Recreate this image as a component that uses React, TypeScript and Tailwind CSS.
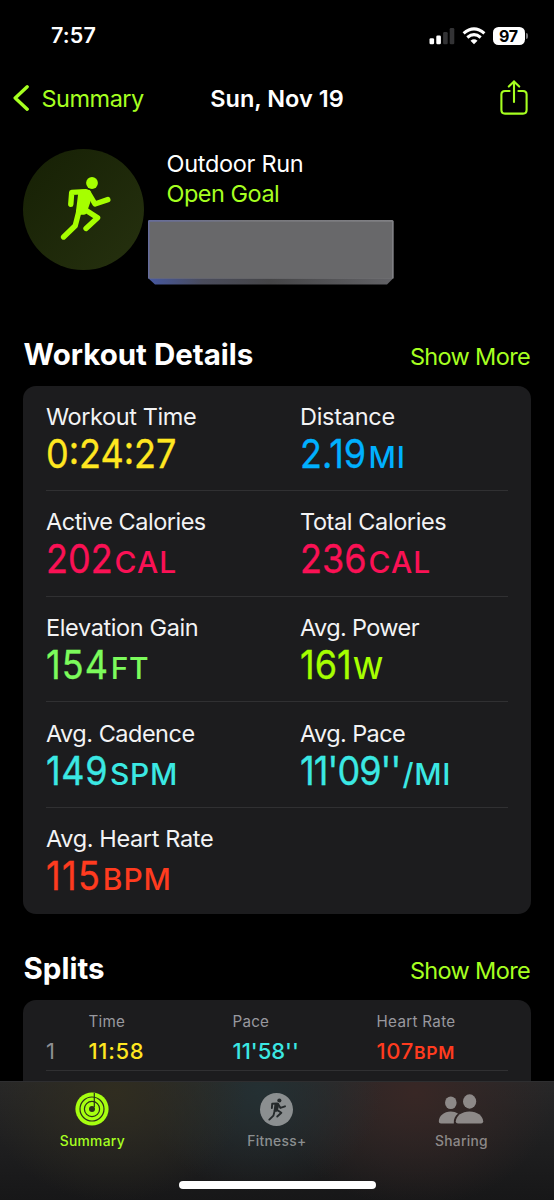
import React from "react";

type Metric = {
  label: string;
  labelClass: string;
  value: string;
  valueClass: string;
  unit: string;
  unitClass: string;
  color: string;
};

const metrics: Metric[] = [
  { label: "Workout Time", labelClass: "tracking-[-0.4px]", value: "0:24:27", valueClass: "", unit: "", unitClass: "", color: "text-[#ffe620]" },
  { label: "Distance", labelClass: "tracking-[-0.28px]", value: "2.19", valueClass: "", unit: "MI", unitClass: "tracking-[0.9px]", color: "text-[#00b0ff]" },
  { label: "Active Calories", labelClass: "tracking-[-0.5px]", value: "202", valueClass: "", unit: "CAL", unitClass: "tracking-[1.2px]", color: "text-[#fa1155]" },
  { label: "Total Calories", labelClass: "tracking-[-0.4px]", value: "236", valueClass: "", unit: "CAL", unitClass: "tracking-[1.2px]", color: "text-[#fa1155]" },
  { label: "Elevation Gain", labelClass: "tracking-[-0.38px]", value: "154", valueClass: "tracking-[1.3px]", unit: "FT", unitClass: "tracking-[0.5px]", color: "text-[#7cfb5c]" },
  { label: "Avg. Power", labelClass: "tracking-[-0.62px]", value: "161", valueClass: "", unit: "W", unitClass: "", color: "text-[#a6ff00]" },
  { label: "Avg. Cadence", labelClass: "tracking-[-0.5px]", value: "149", valueClass: "tracking-[0.7px]", unit: "SPM", unitClass: "tracking-[0.7px]", color: "text-[#3be8e3]" },
  { label: "Avg. Pace", labelClass: "tracking-[-0.6px]", value: "11'09''", valueClass: "tracking-[-1px]", unit: "/MI", unitClass: "tracking-[0.6px]", color: "text-[#3be8e3]" },
  { label: "Avg. Heart Rate", labelClass: "tracking-[-0.36px]", value: "115", valueClass: "tracking-[1.5px]", unit: "BPM", unitClass: "tracking-[1px]", color: "text-[#ff3b1f]" },
];

function Runner({ className }: { className: string }) {
  return (
    <svg viewBox="60 176 52 65" className={className} fill="none" stroke="currentColor" strokeWidth="5.4" strokeLinecap="round" strokeLinejoin="round">
      <circle cx="92" cy="183" r="5.9" fill="currentColor" stroke="none" />
      <path d="M70.8 204.2 71.7 192.4 86 191.6" />
      <path d="M88.5 193 95 204 107.8 199.6" />
      <path d="M84 209 97.6 217.8 86 228.4" />
      <path d="M79 211 75.2 225.8 63.6 237" />
      <path d="M81 192.5H88L87.5 202 84 212H78.6Z" fill="currentColor" />
    </svg>
  );
}

function StatusBar() {
  return (
    <div className="flex h-[71px] shrink-0 items-center justify-between pr-[26px] pl-[51px] text-white">
      <span className="text-[21.5px] leading-none font-semibold tracking-[0.15px]">7:57</span>
      <div className="flex items-center">
        <svg className="mr-[7px] h-[18px] w-[26px]" viewBox="0 0 26 18" fill="#fff">
          <rect x="0.5" y="11.2" width="4.6" height="6" rx="1.3" />
          <rect x="7.3" y="8.5" width="4.6" height="8.7" rx="1.3" />
          <rect x="14.1" y="5" width="4.6" height="12.2" rx="1.3" fill="#333335" />
          <rect x="20.7" y="1" width="4.6" height="16.2" rx="1.3" fill="#333335" />
        </svg>
        <svg className="mr-[7px] h-[18px] w-[24px]" viewBox="0 0 24 18" fill="none" stroke="#fff" strokeWidth="3.1">
          <path d="M1.6 6.4Q12 -2.6 22.4 6.4" />
          <path d="M5.3 10.5Q12 4.9 18.7 10.5" />
          <path d="M12 17.3 8.5 13.7Q12 11 15.5 13.7Z" fill="#fff" stroke="none" />
        </svg>
        <span className="flex h-[18px] w-[32px] items-center justify-center rounded-[5.5px] bg-white text-[16px] leading-none font-bold tracking-[-0.3px] text-black">97</span>
        <span className="ml-[1.5px] h-[6px] w-[2px] rounded-r-full bg-[#77777a]" />
      </div>
    </div>
  );
}

function NavBar() {
  return (
    <div className="flex h-[54px] shrink-0 items-center justify-between pt-px pr-[26px] pl-[13px]">
      <div className="flex w-[198px] items-center text-[#a6ff20]">
        <svg className="mb-px h-[28px] w-[17px]" viewBox="0 0 17 28" fill="none" stroke="currentColor" strokeWidth="3.4" strokeLinecap="round" strokeLinejoin="round">
          <path d="M14.2 2.8 2.2 14 14.2 25.2" />
        </svg>
        <span className="ml-[11.5px] text-[23.5px] leading-[30px] tracking-[-0.5px]">Summary</span>
      </div>
      <span className="text-[23.5px] leading-[30px] font-semibold whitespace-nowrap text-white">Sun, Nov 19</span>
      <div className="flex w-[185px] justify-end text-[#a6ff20]">
        <svg className="mb-[4px] h-[36px] w-[28px]" viewBox="0 0 28 36" fill="none" stroke="currentColor" strokeWidth="2.1" strokeLinecap="round" strokeLinejoin="round">
          <path d="M9.6 12H5Q1.4 12 1.4 15.6V31Q1.4 34.6 5 34.6H23Q26.6 34.6 26.6 31V15.6Q26.6 12 23 12H18.4" />
          <path d="M14 23V2.4M8.8 7.6 14 2.4 19.2 7.6" />
        </svg>
      </div>
    </div>
  );
}

function SectionHead({ title }: { title: string }) {
  return (
    <div className="flex h-[38px] shrink-0 justify-between pr-[24px] pl-[23.5px]">
      <h2 className="text-[29.5px] leading-[35px] font-bold text-white">{title}</h2>
      <span className="mt-[2px] text-[23.5px] leading-[36px] tracking-[-0.65px] text-[#a6ff20]">Show More</span>
    </div>
  );
}

function MetricCell({ m }: { m: Metric }) {
  return (
    <div className="w-[254px] shrink-0 pt-[16.4px] whitespace-nowrap">
      <div className={`text-[23.5px] leading-[30px] text-[#f3f3f4] ${m.labelClass}`}>{m.label}</div>
      <div className={`h-[44px] origin-left scale-x-90 text-[40px] leading-[44px] ${m.color}`}>
        <span className={`[-webkit-text-stroke:0.35px] ${m.valueClass}`}>{m.value}</span>
        {m.unit && <span className={`ml-[2px] inline-block origin-left scale-x-[1.11] text-[30px] leading-none font-medium ${m.unitClass}`}>{m.unit}</span>}
      </div>
    </div>
  );
}

function Tab({ label, className, children }: { label: string; className: string; children: React.ReactNode }) {
  return (
    <div className={`flex w-[184.6px] flex-col items-center ${className}`}>
      <div className="flex h-[34px] items-center">{children}</div>
      <span className="mt-[6px] text-[13.8px] leading-[18px] font-medium tracking-[0.3px]">{label}</span>
    </div>
  );
}

export default function App() {
  const rows: Metric[][] = [];
  for (let i = 0; i < metrics.length; i += 2) rows.push(metrics.slice(i, i + 2));

  return (
    <div className="flex h-[1200px] w-[554px] flex-col overflow-hidden bg-black font-[Inter,sans-serif]">
      <StatusBar />
      <NavBar />

      <main className="flex h-[956px] shrink-0 flex-col overflow-hidden">
        <div className="flex h-[211.5px] shrink-0 pt-[24px] pl-[23px]">
          <div className="flex size-[121px] shrink-0 items-center justify-center rounded-full bg-linear-to-br from-[#162005] to-[#26310f] pb-[2px] pl-[5px] text-[#a6ff00]">
            <Runner className="h-[65px] w-[52px]" />
          </div>
          <div className="ml-[4px]">
            <div className="ml-[18.5px] text-[23.5px] leading-[29.5px]">
              <div className="tracking-[-0.3px] text-white">Outdoor Run</div>
              <div className="tracking-[-0.5px] text-[#a6ff20]">Open Goal</div>
            </div>
            <svg className="mt-[12px] h-[65px] w-[246px]" viewBox="0 0 246 65">
              <defs>
                <linearGradient id="edge" x1="0" x2="1" y1="0" y2="0">
                  <stop offset="0" stopColor="#4658a0" />
                  <stop offset="0.22" stopColor="#4a4c5c" />
                  <stop offset="0.5" stopColor="#454547" />
                  <stop offset="1" stopColor="#626266" />
                </linearGradient>
                <linearGradient id="rim" x1="0" x2="1" y1="0" y2="0">
                  <stop offset="0" stopColor="#666c9c" />
                  <stop offset="0.4" stopColor="#77777c" />
                  <stop offset="1" stopColor="#808084" />
                </linearGradient>
              </defs>
              <path d="M0 1.5Q0 0 1.5 0H244Q245.5 0 245.5 1.5V58L239 64.5H7L0 58Z" fill="url(#edge)" />
              <path d="M0 1.5Q0 0 1.5 0H244Q245.5 0 245.5 1.5V58.5H0Z" fill="url(#rim)" />
              <path d="M1.5 1.8H244V58.6H1.5Z" fill="#68686a" />
            </svg>
          </div>
        </div>

        <SectionHead title="Workout Details" />

        <section className="mx-[23px] mt-[11px] h-[528px] shrink-0 rounded-[13px] bg-[#1c1c1e] px-[23px]">
          {rows.map((row, i) => (
            <div key={i} className={`flex h-[105.6px] ${i < rows.length - 1 ? "border-b border-[#303032]" : ""}`}>
              {row.map((m) => (
                <MetricCell key={m.label} m={m} />
              ))}
            </div>
          ))}
        </section>

        <div className="h-[37px] shrink-0" />
        <SectionHead title="Splits" />

        <section className="mx-[23px] mt-[11px] h-[120px] shrink-0 rounded-t-[13px] bg-[#1c1c1e] px-[23px]">
          <div className="grid h-[71.5px] grid-cols-[42.5px_144px_144px_1fr] content-start border-b border-[#303032] pt-[13px]">
            <span />
            <span className="text-[15.2px] leading-[18px] tracking-[0.2px] text-[#98989e]">Time</span>
            <span className="text-[15.2px] leading-[18px] tracking-[0.2px] text-[#98989e]">Pace</span>
            <span className="text-[15.2px] leading-[18px] tracking-[0.3px] text-[#98989e]">Heart Rate</span>
            <span className="mt-[7px] text-[22px] leading-[26px] text-[#8e8e93]">1</span>
            <span className="mt-[7px] text-[22px] leading-[26px] font-medium tracking-[0.7px] text-[#ffe620]">11:58</span>
            <span className="mt-[7px] text-[22px] leading-[26px] font-medium text-[#3be8e3]">11'58''</span>
            <span className="mt-[7px] text-[22px] leading-[26px] font-medium tracking-[0.7px] text-[#ff3b1f]">
              107<span className="text-[17.5px] font-semibold">BPM</span>
            </span>
          </div>
        </section>
      </main>

      <footer className="flex h-[119px] shrink-0 flex-col items-center border-t border-[#2e2e30] bg-[#1e1e1f] bg-[radial-gradient(ellipse_130px_110px_at_115px_10px,#302d20,transparent),radial-gradient(ellipse_120px_100px_at_262px_10px,#243033,transparent),radial-gradient(ellipse_140px_115px_at_415px_10px,#382725,transparent),linear-gradient(#272728,#171718)]">
        <div className="flex h-[99px] w-full pt-[10px]">
          <Tab label="Summary" className="text-[#a6ff20]">
            <svg className="size-[34px]" viewBox="0 0 34 34" fill="none">
              <circle cx="17" cy="17" r="16.6" fill="#a6ff10" />
              <g stroke="#29301a" strokeWidth="1.2">
                <circle cx="17" cy="17" r="12" />
                <circle cx="17" cy="17" r="7.6" />
                <path d="M19.3 1V15" />
              </g>
              <circle cx="17" cy="17" r="3" fill="#29301a" />
            </svg>
          </Tab>
          <Tab label="Fitness+" className="text-[#8b8f90]">
            <span className="flex size-[33px] items-center justify-center rounded-full bg-[#8b8f90] text-[#252a2b]">
              <Runner className="h-[23px] w-[18.5px]" />
            </span>
          </Tab>
          <Tab label="Sharing" className="text-[#8d8988]">
            <svg className="h-[30px] w-[46px]" viewBox="0 0 46 30" fill="currentColor">
              <ellipse cx="12.8" cy="8.8" rx="5.8" ry="6.3" />
              <path d="M3 29.5Q.8 29.5 .8 27.5C1 22 6 17.6 12.8 17.6Q17 17.6 20 19.5C17 21.8 15.6 25 15.8 29.5Z" />
              <ellipse cx="31.6" cy="7.5" rx="6.6" ry="7.2" />
              <path d="M20 29.5Q17.8 29.5 17.8 27.3C18.2 21.6 23.8 17.4 31.5 17.4S44.8 21.6 45.2 27.3Q45.2 29.5 43 29.5Z" />
            </svg>
          </Tab>
        </div>
        <div className="h-[8px] w-[197px] rounded-full bg-white" />
      </footer>
    </div>
  );
}
